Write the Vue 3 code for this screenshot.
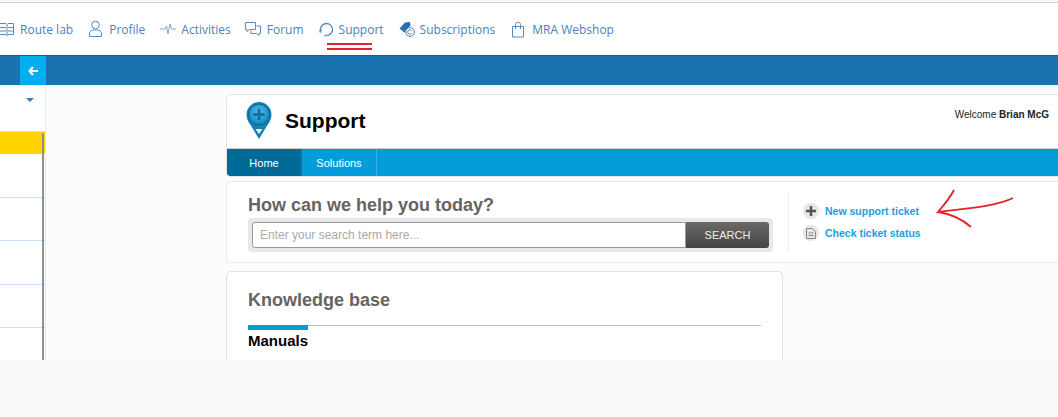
<script setup>
const rows = [1, 2, 3, 4]
</script>

<template>
  <div class="page">
    <header class="nav">
      <a class="item route">
        <svg width="14" height="16" viewBox="0 0 14 16" class="ic"><path d="M-1 2.500h7l1 1 1-1h5.500v11H8l-1 1-1-1h-7zM7 3.500v11M-1 6.500h7M-1 10h7M8 6.500h5.500M8 10h5.500" /></svg>
        <span>Route lab</span>
      </a>
      <a class="item profile">
        <svg width="15" height="18" viewBox="0 0 15 18" class="ic"><circle cx="7.500" cy="5" r="3.800" /><path d="M1.500 16.500v-2.500c0-2.500 2-4 4-4h4c2 0 4 1.500 4 4v2.500z" /></svg>
        <span>Profile</span>
      </a>
      <a class="item act">
        <svg width="16" height="14" viewBox="0 0 16 14" class="ic thin"><path d="M0 7h5l1.500-3 1.500 8 2-10 1.500 5H16" /></svg>
        <span>Activities</span>
      </a>
      <a class="item forum">
        <svg width="16" height="16" viewBox="0 0 16 16" class="ic"><path d="M.5 1.500h10v7H4.500L2 10.500v-2H.5z" /><path d="M11.500 5h4v7.500h-1.500v2l-2.500-2H6V9.500" /></svg>
        <span>Forum</span>
      </a>
      <a class="item support">
        <svg width="14" height="16" viewBox="0 0 14 16" class="head"><path d="M1.500 8.500a6 6 0 1 1 6.500 6" fill="none" stroke="#5a8bbb" stroke-width="1.300" /><path d="M.5 8h2v3.500h-2z" fill="#5a8bbb" /><circle cx="6.500" cy="14.500" r="1.100" fill="#5a8bbb" /></svg>
        <span>Support</span>
      </a>
      <a class="item subs">
        <svg width="16" height="16" viewBox="0 0 16 16" class="tag"><path d="M.5 7.500 6 1.500l5-.5.500 3.500-6 7z" fill="#2f6da8" /><circle cx="11" cy="11" r="4.400" fill="#fff" stroke="#4f81b5" /><path d="M12.700 9.800a2.200 2.200 0 1 0 0 2.400" fill="none" stroke="#4f81b5" /></svg>
        <span>Subscriptions</span>
      </a>
      <a class="item shop">
        <svg width="14" height="17" viewBox="0 0 14 17" class="ic"><path d="M1.500 5.500h11v10.500h-11zM4.500 8V3.500c0-3 5-3 5 0V8" /></svg>
        <span>MRA Webshop</span>
      </a>
    </header>

    <div class="bar">
      <button class="back">
        <svg width="10" height="10" viewBox="0 0 10 10"><path d="M5 1 1.500 5 5 9M1.500 5H10" fill="none" stroke="#fff" stroke-width="2" /></svg>
      </button>
    </div>

    <div class="main">
      <aside class="side">
        <div class="side-top"><i class="caret"></i></div>
        <div class="rows">
          <div class="row yellow"></div>
          <div v-for="r in rows" :key="r" class="row"></div>
        </div>
      </aside>

      <div class="content">
        <section class="panel">
          <div class="brand">
            <svg class="pin" width="26" height="38" viewBox="0 0 26 38">
              <defs>
                <radialGradient id="pinfill" cx="50%" cy="40%" r="55%">
                  <stop offset="0" stop-color="#55c4f0" />
                  <stop offset="1" stop-color="#1488c2" />
                </radialGradient>
              </defs>
              <path d="M13 37 4.500 23C1.500 19 .5 16 .5 12.500a12.500 12.500 0 0 1 25 0c0 3.500-1 6.500-4 10.500z" fill="#1a7fb3" />
              <circle cx="13" cy="12.500" r="10.500" fill="url(#pinfill)" stroke="#0d5f8c" />
              <path d="M13 7v11M7.500 12.500h11" stroke="#136f9f" stroke-width="3" />
              <path d="M9.500 27h7L13 32z" fill="#dff3fb" />
            </svg>
            <h1>Support</h1>
            <p class="welcome">Welcome <b>Brian McG</b></p>
          </div>
          <nav class="tabs">
            <a class="tab on">Home</a>
            <a class="tab">Solutions</a>
          </nav>
        </section>

        <section class="search-card">
          <div class="search-col">
            <h2>How can we help you today?</h2>
            <div class="search">
              <div class="field">Enter your search term here...</div>
              <div class="go">SEARCH</div>
            </div>
          </div>
          <div class="links">
            <a class="link">
              <span class="bubble"><svg width="10" height="10" viewBox="0 0 10 10"><path d="M5 0v10M0 5h10" stroke="#555" stroke-width="2.500" /></svg></span>
              New support ticket
            </a>
            <a class="link">
              <span class="bubble"><svg width="10" height="11" viewBox="0 0 10 11"><path d="M.5.5h6l3 3v7H.5zM2.500 5h5M2.500 7.500h5" fill="none" stroke="#888" /></svg></span>
              Check ticket status
            </a>
          </div>
        </section>

        <section class="kb">
          <h2>Knowledge base</h2>
          <div class="rule"><i></i></div>
          <h3>Manuals</h3>
        </section>
      </div>
    </div>

    <footer class="foot"></footer>

    <svg class="marks" width="1058" height="417" viewBox="0 0 1058 417">
      <path d="M327 44h45M327 49h45" stroke="#e8202a" stroke-width="2" fill="none" />
      <path d="M954 190C950 198 944 205 938 212C960 209 995 207 1013 198M938 212C952 214 963 220 971 227" stroke="#e8202a" stroke-width="1.800" fill="none" />
    </svg>
  </div>
</template>

<style>
html, body { margin: 0; }
</style>

<style scoped>
.page {
  position: relative;
  width: 1058px;
  height: 417px;
  overflow: hidden;
  display: flex;
  flex-direction: column;
  background: #fafafa;
  font-family: "Liberation Sans", Arial, sans-serif;
}
.nav {
  flex: none;
  box-sizing: border-box;
  height: 53px;
  margin-top: 2px;
  border-top: 1px solid #d0d0d0;
  background: #fff;
  display: flex;
  align-items: center;
  font: 12px "Open Sans", sans-serif;
  color: #4f81b5;
}
.item { display: flex; align-items: center; gap: 6px; flex: none; }
.route { margin-left: 0; }
.profile { margin-left: 15px; }
.act { margin-left: 15px; gap: 5px; }
.forum { margin-left: 14px; }
.support { margin-left: 15px; }
.subs { margin-left: 15px; gap: 5px; }
.shop { margin-left: 16px; gap: 7px; }
.ic { fill: none; stroke: #5a8bbb; stroke-width: 1; overflow: visible; }
.thin { stroke: #7fa6cc; }
.tag, .head { overflow: visible; }
.bar {
  flex: none;
  height: 30px;
  background: #1b72b1;
  border-top: 1px solid #175f95;
  box-sizing: border-box;
  padding-left: 20px;
}
.back {
  display: flex;
  align-items: center;
  justify-content: center;
  width: 26px;
  height: 29px;
  padding: 0;
  border: 0;
  background: #02aeef;
}
.main {
  flex: none;
  height: 275px;
  display: flex;
  overflow: hidden;
  background: #fcfcfc;
}
.side {
  flex: none;
  box-sizing: border-box;
  width: 46px;
  background: #fff;
  border-right: 1px solid #e0effc;
}
.side-top { height: 46px; position: relative; }
.caret {
  position: absolute;
  left: 26px;
  top: 13px;
  border: 4px solid transparent;
  border-top: 4px solid #2e7fbe;
  border-bottom: 0;
}
.rows {
  border-top: 1px solid #c9e2fa;
  position: relative;
  height: 229px;
}
.rows::after {
  content: "";
  position: absolute;
  left: 42px;
  top: 1px;
  bottom: 0;
  width: 2px;
  background: #8f8f8f;
}
.row { height: 42.5px; border-bottom: 1px solid #c9e2fa; }
.yellow { height: 22px; background: #ffd400; border-bottom: 0; }
.content {
  flex: none;
  width: 848px;
  margin-left: 180px;
  padding-top: 9px;
  display: flex;
  flex-direction: column;
}
.panel {
  flex: none;
  height: 83px;
  box-sizing: border-box;
  border: 1px solid #e4e4e4;
  border-right: 0;
  border-radius: 5px 0 0 5px;
  background: #fff;
  display: flex;
  flex-direction: column;
  overflow: hidden;
}
.brand {
  flex: none;
  height: 54px;
  display: flex;
  align-items: flex-start;
  border-bottom: 1px solid #ccc;
  box-sizing: border-box;
  padding: 7px 25px 0 19px;
}
.brand h1 {
  margin: 6px 0 0 13px;
  font-size: 21px;
  line-height: 26px;
  color: #000;
}
.welcome {
  margin: 7px 0 0 auto;
  font-size: 10px;
  line-height: 12px;
  color: #222;
}
.tabs {
  flex: 1;
  display: flex;
  background: #049cdb;
  font-size: 11px;
  color: #fff;
}
.tab {
  width: 74px;
  border-right: 1px solid #3ab0e3;
  display: flex;
  align-items: center;
  justify-content: center;
}
.on { background: #006a99; border-right-color: #0a7caf; }
.search-card {
  flex: none;
  height: 82px;
  margin-top: 4px;
  box-sizing: border-box;
  border: 1px solid #ececec;
  border-right: 0;
  border-radius: 5px 0 0 5px;
  background: #fff;
  display: flex;
  padding: 12px 0 0 21px;
}
.search-col { width: 522px; flex: none; }
.search-card h2 {
  margin: 0;
  font-size: 18px;
  line-height: 22px;
  color: #676361;
}
.search {
  display: flex;
  box-sizing: border-box;
  width: 525px;
  height: 34px;
  margin-top: 2px;
  padding: 4px;
  background: #e8e8e8;
  border-radius: 4px;
}
.field {
  flex: 1;
  box-sizing: border-box;
  border: 1px solid #999;
  border-radius: 3px 0 0 3px;
  background: #fff;
  padding-left: 7px;
  font-size: 12px;
  line-height: 24px;
  color: #aaa;
}
.go {
  flex: none;
  width: 83px;
  border-radius: 0 3px 3px 0;
  background: linear-gradient(#6b6967, #444);
  color: #eee;
  font-size: 11px;
  line-height: 26px;
  text-align: center;
}
.links {
  margin-left: 18px;
  margin-top: -2px;
  height: 60px;
  padding-left: 14px;
  border-left: 1px solid #eee;
  display: flex;
  flex-direction: column;
  justify-content: center;
  gap: 6px;
}
.link {
  display: flex;
  align-items: center;
  gap: 6px;
  font-size: 10.500px;
  font-weight: bold;
  color: #1a9fe0;
}
.bubble {
  width: 16px;
  height: 16px;
  border-radius: 50%;
  background: #e6e6e6;
  display: flex;
  align-items: center;
  justify-content: center;
}
.kb {
  flex: none;
  width: 557px;
  height: 100px;
  margin-top: 8px;
  box-sizing: border-box;
  border: 1px solid #e2e2e2;
  border-bottom: 0;
  border-radius: 5px 5px 0 0;
  background: #fff;
  padding: 17px 21px 0;
}
.kb h2 {
  margin: 0;
  font-size: 18px;
  line-height: 22px;
  color: #676361;
}
.rule {
  margin-top: 14px;
  height: 1px;
  background: #8fd0ec;
  position: relative;
}
.rule i {
  position: absolute;
  left: 0;
  top: 0;
  width: 60px;
  height: 5px;
  background: #049cdb;
}
.kb h3 {
  margin: 6px 0 0;
  font-size: 15px;
  line-height: 18px;
  color: #000;
}
.foot { flex: 1; background: #fafafa; }
.marks { position: absolute; left: 0; top: 0; pointer-events: none; }
</style>
